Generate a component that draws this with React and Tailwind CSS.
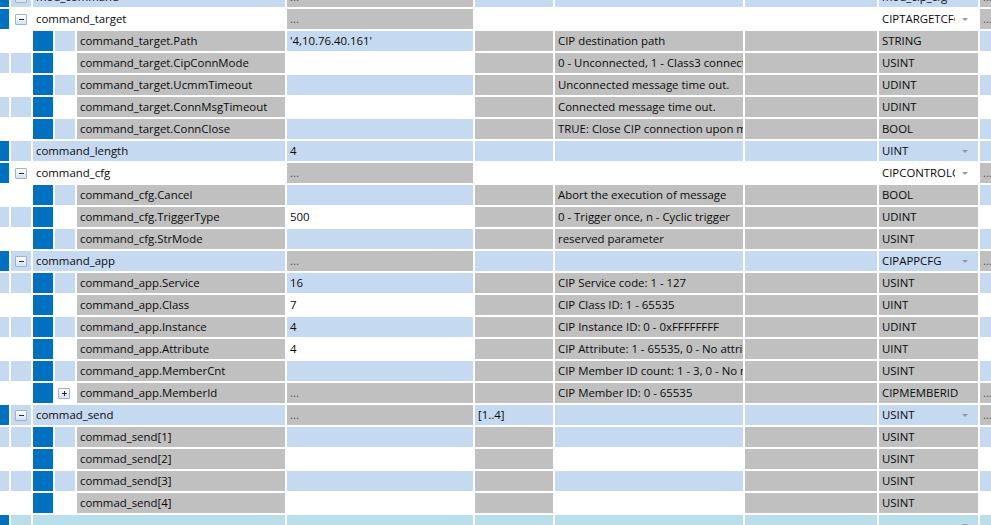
import React from 'react';

const BLUE = 'bg-[#c5d9f1]';
const WHITE = 'bg-white';
const GRAY = 'bg-[#c0c0c0]';
const DARK = 'bg-[#0070c0]';
const SEL = 'bg-[#b9dfea]';

// tree columns + value / range / comment / extra / type / last
const GRID =
  'grid h-[20px] gap-x-[2px] grid-cols-[9px_20px_20px_20px_208px_186px_78px_188px_132px_99px_40px]';

const group = (name, s, o = {}) => ({ kind: 'group', name, s, ...o });
const child = (name, s, ind, o = {}) => ({ kind: 'child', name, s, ind, ...o });

const rows = [
  group('mod_command', BLUE, { exp: true, dots: true, type: 'mod_cip_cfg' }),
  group('command_target', WHITE, { exp: true, dots: true, type: 'CIPTARGETCFG' }),
  child('command_target.Path', BLUE, WHITE, { value: "'4,10.76.40.161'", desc: 'CIP destination path', type: 'STRING' }),
  child('command_target.CipConnMode', WHITE, BLUE, { desc: '0 - Unconnected, 1 - Class3 connected', type: 'USINT' }),
  child('command_target.UcmmTimeout', BLUE, WHITE, { desc: 'Unconnected message time out.', type: 'UDINT' }),
  child('command_target.ConnMsgTimeout', WHITE, BLUE, { desc: 'Connected message time out.', type: 'UDINT' }),
  child('command_target.ConnClose', BLUE, WHITE, { desc: 'TRUE: Close CIP connection upon message done', type: 'BOOL' }),
  group('command_length', BLUE, { value: '4', type: 'UINT' }),
  group('command_cfg', WHITE, { exp: true, dots: true, type: 'CIPCONTROLCFG' }),
  child('command_cfg.Cancel', BLUE, WHITE, { desc: 'Abort the execution of message', type: 'BOOL' }),
  child('command_cfg.TriggerType', WHITE, BLUE, { value: '500', desc: '0 - Trigger once, n - Cyclic trigger', type: 'UDINT' }),
  child('command_cfg.StrMode', BLUE, WHITE, { desc: 'reserved parameter', type: 'USINT' }),
  group('command_app', BLUE, { exp: true, dots: true, type: 'CIPAPPCFG' }),
  child('command_app.Service', BLUE, BLUE, { value: '16', desc: 'CIP Service code: 1 - 127', type: 'USINT' }),
  child('command_app.Class', WHITE, WHITE, { value: '7', desc: 'CIP Class ID: 1 - 65535', type: 'UINT' }),
  child('command_app.Instance', BLUE, BLUE, { value: '4', desc: 'CIP Instance ID: 0 - 0xFFFFFFFF', type: 'UDINT' }),
  child('command_app.Attribute', WHITE, WHITE, { value: '4', desc: 'CIP Attribute: 1 - 65535, 0 - No attribute', type: 'UINT' }),
  child('command_app.MemberCnt', BLUE, BLUE, { desc: 'CIP Member ID count: 1 - 3, 0 - No member', type: 'USINT' }),
  child('command_app.MemberId', WHITE, WHITE, { ro: true, plus: true, desc: 'CIP Member ID: 0 - 65535', type: 'CIPMEMBERID' }),
  group('commad_send', BLUE, { exp: true, dots: true, range: '[1..4]', type: 'USINT' }),
  child('commad_send[1]', BLUE, BLUE, { descEdit: true, type: 'USINT' }),
  child('commad_send[2]', WHITE, WHITE, { descEdit: true, type: 'USINT' }),
  child('commad_send[3]', BLUE, BLUE, { descEdit: true, type: 'USINT' }),
  child('commad_send[4]', WHITE, WHITE, { descEdit: true, type: 'USINT' }),
  group('', SEL, { type: '' }),
];

function Cell({ bg, children, className = '' }) {
  return (
    <div className={`${bg} flex items-center overflow-hidden whitespace-nowrap px-[3px] ${className}`}>
      {children}
    </div>
  );
}

function Dots() {
  return <span className="text-[#555]">...</span>;
}

function Expander({ plus }) {
  return (
    <div className="w-[12px] h-[11px] border border-[#9db2cb] rounded-[1px] bg-gradient-to-b from-white to-[#d6e2f0] flex items-center justify-center relative">
      <div className="w-[5px] h-px bg-[#2b2b2b]" />
      {plus && <div className="absolute w-px h-[5px] bg-[#2b2b2b]" />}
    </div>
  );
}

function TypeCell({ bg, text, arrow }) {
  return (
    <Cell bg={bg} className="pr-[3px]">
      <span className="flex-1 overflow-hidden">{text}</span>
      {arrow && (
        <div className="w-[20px] flex justify-center">
          <svg width="6" height="3" viewBox="0 0 6 3">
            <polygon points="0,0 6,0 3,3" fill="#9a9a9a" />
          </svg>
        </div>
      )}
    </Cell>
  );
}

function GroupRow({ r }) {
  return (
    <div className={GRID}>
      <div className={DARK} />
      <Cell bg={r.s} className="pl-[4px]">{r.exp && <Expander />}</Cell>
      <Cell bg={r.s} className="col-span-3">{r.name}</Cell>
      {r.dots ? <Cell bg={GRAY}><Dots /></Cell> : <Cell bg={r.s}>{r.value}</Cell>}
      <Cell bg={r.s}>{r.range}</Cell>
      <Cell bg={r.s} />
      <Cell bg={r.s} />
      <TypeCell bg={r.s} text={r.type} arrow />
      {r.dots ? <Cell bg={GRAY}><Dots /></Cell> : <Cell bg={r.s} />}
    </div>
  );
}

function ChildRow({ r }) {
  return (
    <div className={GRID}>
      <div className={r.ind} />
      <div className={r.ind} />
      <div className={DARK} />
      <Cell bg={r.s} className="pl-[3px]">{r.plus && <Expander plus />}</Cell>
      <Cell bg={GRAY}>{r.name}</Cell>
      {r.ro ? <Cell bg={GRAY}><Dots /></Cell> : <Cell bg={r.s}>{r.value}</Cell>}
      <Cell bg={GRAY} />
      <Cell bg={r.descEdit ? r.s : GRAY}>{r.desc}</Cell>
      <Cell bg={GRAY} />
      <TypeCell bg={GRAY} text={r.type} />
      {r.ro ? <Cell bg={GRAY}><Dots /></Cell> : <Cell bg={r.s} />}
    </div>
  );
}

export default function App() {
  return (
    <div
      className="w-[991px] h-[525px] overflow-hidden bg-white text-[11.4px] text-[#0a0a0a]"
      style={{ fontFamily: '"Segoe UI", "Open Sans", "Noto Sans", sans-serif' }}
    >
      <div className="flex flex-col gap-y-[2px] -mt-[13px] w-max">
        {rows.map((r, i) =>
          r.kind === 'group' ? <GroupRow key={i} r={r} /> : <ChildRow key={i} r={r} />
        )}
      </div>
    </div>
  );
}
